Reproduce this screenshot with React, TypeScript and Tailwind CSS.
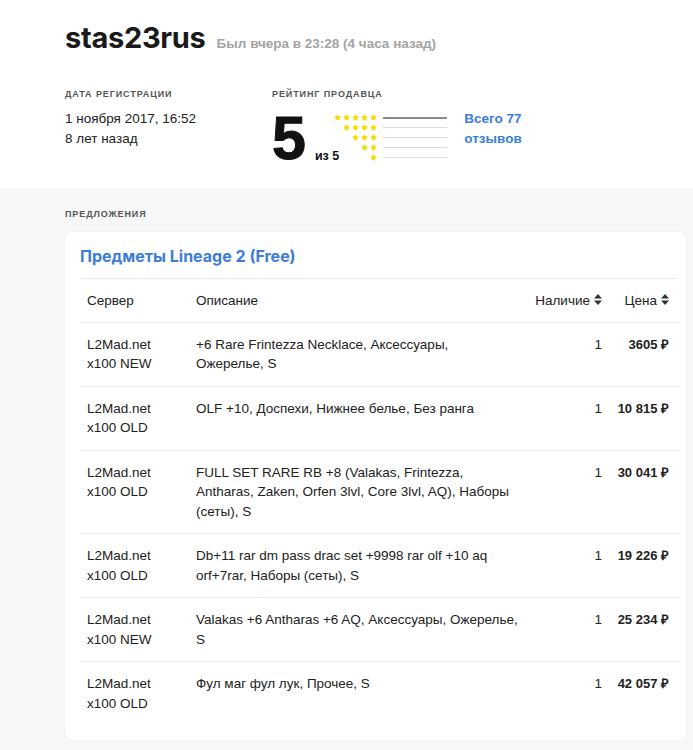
import React from "react";

const rows = [
  { server: ["L2Mad.net", "x100 NEW"], desc: "+6 Rare Frintezza Necklace, Аксессуары, Ожерелье, S", qty: 1, price: "3605 ₽" },
  { server: ["L2Mad.net", "x100 OLD"], desc: "OLF +10, Доспехи, Нижнее белье, Без ранга", qty: 1, price: "10 815 ₽" },
  { server: ["L2Mad.net", "x100 OLD"], desc: "FULL SET RARE RB +8 (Valakas, Frintezza, Antharas, Zaken, Orfen 3lvl, Core 3lvl, AQ), Наборы (сеты), S", qty: 1, price: "30 041 ₽" },
  { server: ["L2Mad.net", "x100 OLD"], desc: "Db+11 rar dm pass drac set +9998 rar olf +10 aq orf+7rar, Наборы (сеты), S", qty: 1, price: "19 226 ₽" },
  { server: ["L2Mad.net", "x100 NEW"], desc: "Valakas +6 Antharas +6 AQ, Аксессуары, Ожерелье, S", qty: 1, price: "25 234 ₽" },
  { server: ["L2Mad.net", "x100 OLD"], desc: "Фул маг фул лук, Прочее, S", qty: 1, price: "42 057 ₽" },
];

// fatter star so it reads like the reference at 7px
const Star = () => (
  <svg width="7" height="7" viewBox="0 0 10 10" className="block">
    <path d="M5 0 L6.5 3.3 L10 3.6 L7.4 6 L8.2 9.8 L5 7.9 L1.8 9.8 L2.6 6 L0 3.6 L3.5 3.3 Z" fill="#f3dc00" />
  </svg>
);

const SortIcon = () => (
  <svg width="8" height="11" viewBox="0 0 8 11" className="inline-block ml-1 -mt-[2px]">
    <path d="M4 0 L8 4.5 L0 4.5 Z M0 6.5 L8 6.5 L4 11 Z" fill="#333" />
  </svg>
);

const Label = ({ children }: { children: React.ReactNode }) => (
  <div className="text-[9px] font-bold uppercase tracking-[0.1em] text-[#555] leading-none">{children}</div>
);

export default function App() {
  return (
    <div className="min-h-[750px] bg-[#f7f7f7] font-[family-name:'Liberation_Sans',Arial,sans-serif] text-[#222]">
      <div className="bg-white pl-[65px] pt-[21px] h-[188px]">
        <div className="flex items-baseline gap-[11px]">
          <h1 className="font-[family-name:Inter,sans-serif] text-[29px] font-bold tracking-[-0.01em] text-[#1a1a1a] leading-[34px]">stas23rus</h1>
          <span className="text-[13.5px] font-bold text-[#a3a3a3]">Был вчера в 23:28 (4 часа назад)</span>
        </div>

        <div className="flex mt-[35px]">
          <div className="w-[207px]">
            <Label>Дата регистрации</Label>
            <div className="mt-[10px] text-[13.5px] leading-[19.5px] text-[#222]">
              <div>1 ноября 2017, 16:52</div>
              <div>8 лет назад</div>
            </div>
          </div>

          <div>
            <Label>Рейтинг продавца</Label>
            <div className="flex mt-[11px]">
              <div className="text-[61px] font-black leading-[50px] mt-[3px] text-[#111] [-webkit-text-stroke:1px_#111]">5</div>
              <div className="text-[12.5px] font-bold self-end ml-[9px] mb-[-3px] text-[#111]">из 5</div>
              <div className="ml-[-7px] mt-[4px] flex flex-col gap-[3px]">
                {[5, 4, 3, 2, 1].map((n) => (
                  <div key={n} className="flex items-center h-[7px]">
                    <div className="w-[45px] flex justify-end gap-[2px]">
                      {Array.from({ length: n }).map((_, i) => (
                        <Star key={i} />
                      ))}
                    </div>
                    <div className={n === 5 ? "ml-[6px] w-[64px] h-[2px] bg-[#8a8a8a]" : "ml-[6px] w-[64px] h-px bg-[#dcdcdc]"} />
                  </div>
                ))}
              </div>
              <div className="ml-[17px] -mt-[1px] text-[13.5px] font-bold leading-[20px] text-[#3b7dd8]">
                <div>Всего 77</div>
                <div>отзывов</div>
              </div>
            </div>
          </div>
        </div>
      </div>

      <div className="pl-[65px] pr-[7px] pt-[22px] pb-[10px]">
        <Label>Предложения</Label>
        <div className="mt-[13px] bg-white rounded-[8px] shadow-[0_0_3px_rgba(0,0,0,0.04)] pl-[15px] pr-[9px] pt-[13px] pb-[15px] w-[621px]">
          <h2 className="font-[family-name:Inter,sans-serif] text-[16px] font-bold text-[#3b7dd8] leading-[22px] pb-[11px] border-b border-[#e6e6e6]">
            Предметы Lineage 2 (Free)
          </h2>
          <table className="w-[597px] table-fixed border-collapse text-[13.5px] leading-[19.5px] text-[#222]">
            <colgroup>
              <col className="w-[109px]" />
              <col className="w-[336px]" />
              <col className="w-[84px]" />
              <col className="w-[68px]" />
            </colgroup>
            <thead>
              <tr className="border-b border-[#e6e6e6]">
                <th className="text-left font-normal px-[7px] py-[11.5px]">Сервер</th>
                <th className="text-left font-normal px-[7px] py-[11.5px]">Описание</th>
                <th className="text-right font-normal px-[7px] py-[11.5px] whitespace-nowrap">
                  Наличие<SortIcon />
                </th>
                <th className="text-right font-normal px-[8px] py-[11.5px] whitespace-nowrap">
                  Цена<SortIcon />
                </th>
              </tr>
            </thead>
            <tbody>
              {rows.map((r, i) => (
                <tr key={i} className={i < rows.length - 1 ? "border-b border-[#e6e6e6] align-top" : "align-top"}>
                  <td className="px-[7px] py-[12px]">
                    <div>{r.server[0]}</div>
                    <div>{r.server[1]}</div>
                  </td>
                  <td className="px-[7px] py-[12px]">{r.desc}</td>
                  <td className="px-[7px] py-[12px] text-right">{r.qty}</td>
                  <td className="px-[8px] py-[12px] text-right text-[13px] font-bold whitespace-nowrap">{r.price}</td>
                </tr>
              ))}
            </tbody>
          </table>
        </div>
      </div>
    </div>
  );
}
